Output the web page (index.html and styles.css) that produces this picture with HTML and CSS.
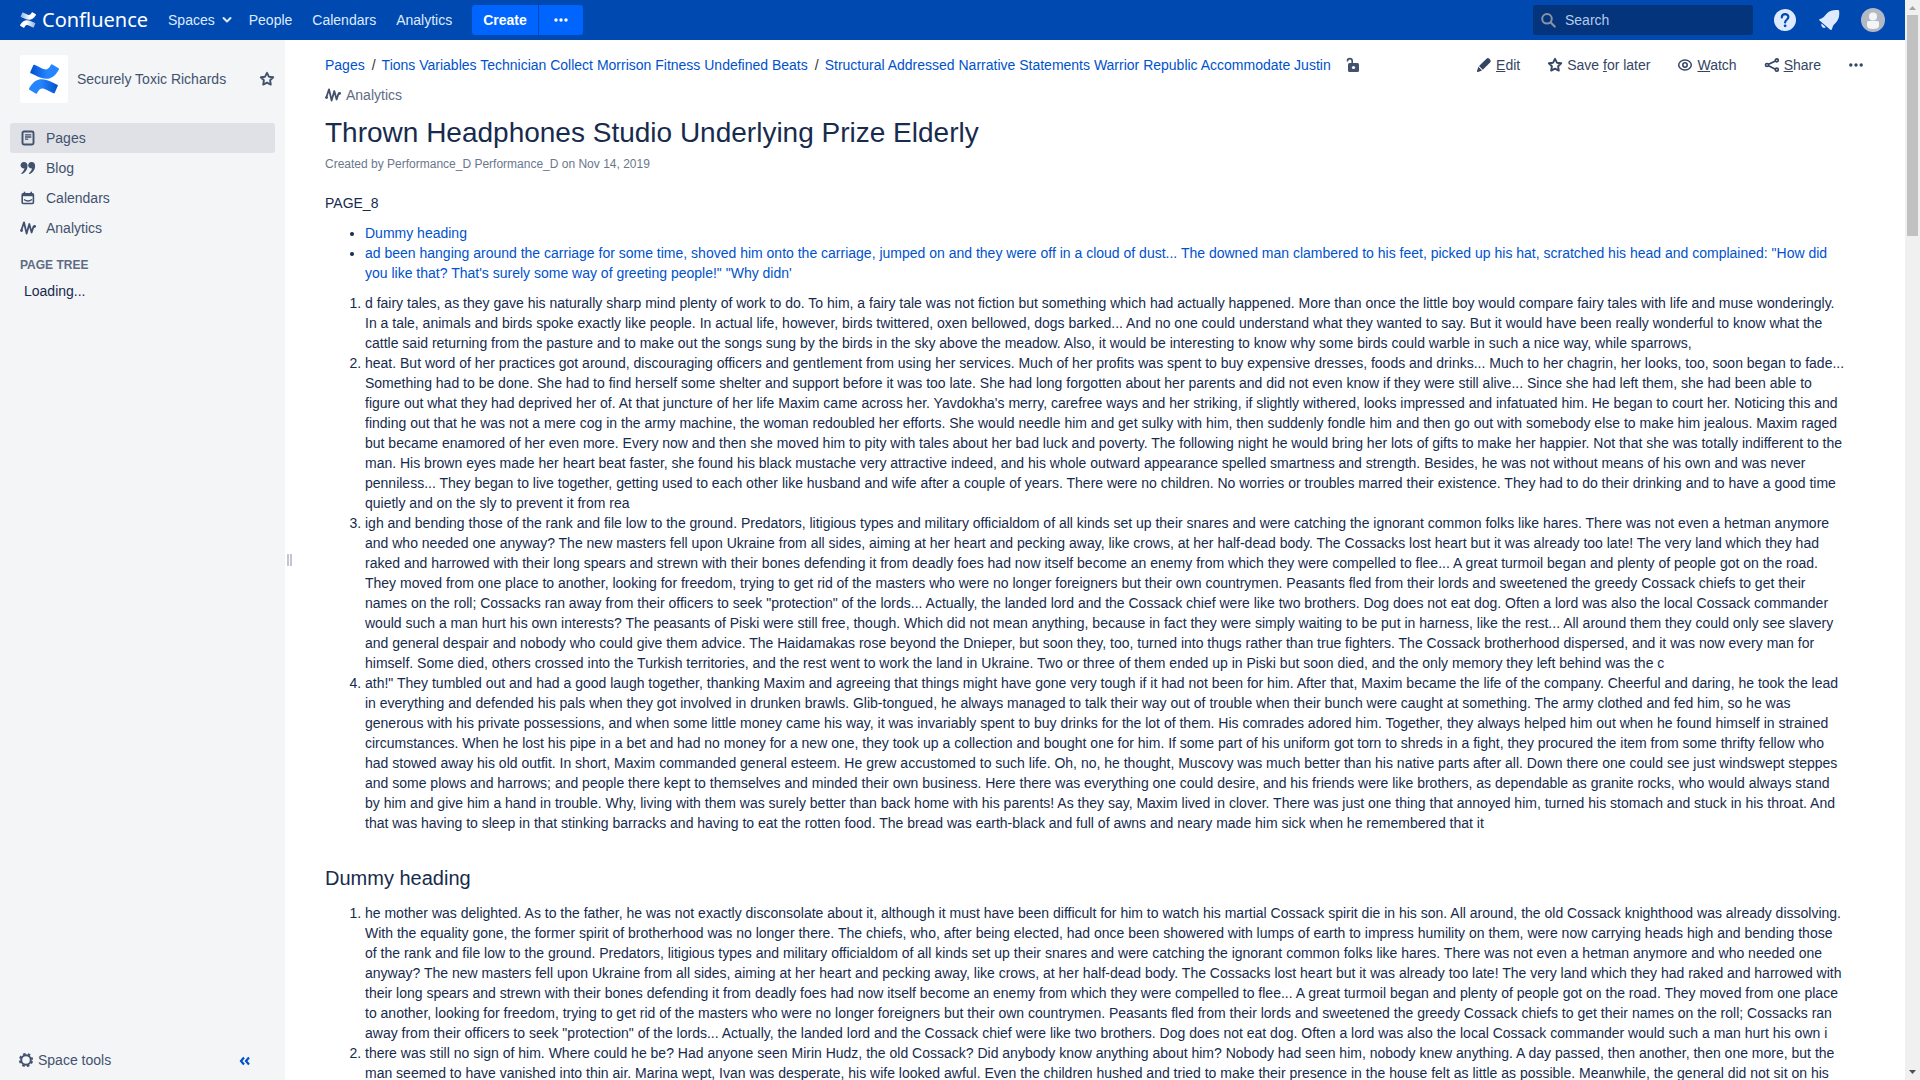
FILE: index.html
```
<!DOCTYPE html>
<html lang="en">
<head>
<meta charset="utf-8">
<title>Thrown Headphones Studio Underlying Prize Elderly - Confluence</title>
<link rel="stylesheet" href="styles.css">
</head>
<body>
<svg class="defs" aria-hidden="true">
  <defs>
    <linearGradient id="blue-top" x1="0" y1="0" x2="1" y2="0"><stop offset="0" stop-color="#0052cc"/><stop offset=".6" stop-color="#2684ff"/></linearGradient>
    <linearGradient id="blue-bottom" x1="0" y1="0" x2="1" y2="0"><stop offset=".4" stop-color="#2684ff"/><stop offset="1" stop-color="#0052cc"/></linearGradient>
    <linearGradient id="white-top" x1="0" y1="0" x2="1" y2="0"><stop offset="0" stop-color="#8fb2e4"/><stop offset=".6" stop-color="#fff"/></linearGradient>
    <linearGradient id="white-bottom" x1="0" y1="0" x2="1" y2="0"><stop offset=".4" stop-color="#fff"/><stop offset="1" stop-color="#8fb2e4"/></linearGradient>
    <path id="wave-bottom" d="M.87 18.257c-.248.382-.53.875-.763 1.245a.764.764 0 0 0 .255 1.04l4.965 3.054a.764.764 0 0 0 1.058-.26c.199-.332.454-.763.733-1.221 1.967-3.247 3.945-2.853 7.508-1.146l4.957 2.337a.764.764 0 0 0 1.028-.382l2.364-5.346a.764.764 0 0 0-.382-1 599.851 599.851 0 0 1-4.965-2.361C10.911 10.97 5.224 11.185.87 18.257z"/>
    <path id="wave-top" d="M23.131 5.743c.249-.405.531-.875.764-1.25a.764.764 0 0 0-.256-1.034L18.675.404a.764.764 0 0 0-1.058.26c-.195.335-.451.763-.734 1.225-1.966 3.246-3.945 2.85-7.508 1.146L4.437.694a.764.764 0 0 0-1.027.382L1.046 6.422a.764.764 0 0 0 .382 1c1.039.49 3.105 1.467 4.965 2.361 6.698 3.246 12.392 3.029 16.738-4.04z"/>
  </defs>
  <symbol id="star" viewBox="0 0 16 16"><path d="M8 1.800l1.900 3.900 4.300.6-3.100 3 .7 4.300L8 11.600l-3.800 2 .7-4.300-3.100-3 4.300-.6z" fill="none" stroke="currentColor" stroke-width="1.900" stroke-linejoin="round"/></symbol>
  <symbol id="pulse" viewBox="0 0 16 16"><path d="M1.300 10.500L4 2.300l2.600 11.200L9.300 4l2.300 8.500 1.800-5.600 1.600-.6" fill="none" stroke="currentColor" stroke-width="1.800" stroke-linecap="round" stroke-linejoin="round"/><circle cx="1.600" cy="10.600" r="1.400" fill="currentColor"/><circle cx="14.400" cy="6.400" r="1.400" fill="currentColor"/></symbol>
  <symbol id="dots" viewBox="0 0 16 16"><g fill="currentColor"><circle cx="2.800" cy="8" r="1.700"/><circle cx="8" cy="8" r="1.700"/><circle cx="13.200" cy="8" r="1.700"/></g></symbol>
</svg>

<div class="app">
  <div class="page">
    <header class="topbar">
      <a class="brand" href="#">
        <svg class="brand-mark" viewBox="0 0 24 24" aria-hidden="true"><use href="#wave-top" fill="url(#white-top)"/><use href="#wave-bottom" fill="url(#white-bottom)"/></svg>
        <span>Confluence</span>
      </a>
      <nav class="topnav">
        <a href="#">Spaces <svg class="chevron" viewBox="0 0 10 10" aria-hidden="true"><path d="M1.500 3L5 6.500 8.500 3" fill="none" stroke="currentColor" stroke-width="2" stroke-linecap="round" stroke-linejoin="round"/></svg></a>
        <a href="#">People</a>
        <a href="#">Calendars</a>
        <a href="#">Analytics</a>
      </nav>
      <div class="create-group">
        <button class="create" type="button">Create</button>
        <button class="create-more" type="button" aria-label="Create from template"><svg class="icon" viewBox="0 0 16 16"><g fill="currentColor"><circle cx="3" cy="8" r="1.700"/><circle cx="8" cy="8" r="1.700"/><circle cx="13" cy="8" r="1.700"/></g></svg></button>
      </div>
      <label class="search">
        <svg class="icon" viewBox="0 0 16 16" aria-hidden="true"><circle cx="6" cy="6.800" r="4.800" fill="none" stroke="currentColor" stroke-width="2"/><path d="M9.700 10.500l4 4" stroke="currentColor" stroke-width="2.200" stroke-linecap="round"/></svg>
        <input type="search" placeholder="Search" aria-label="Search">
      </label>
      <div class="user-tools">
        <button type="button" aria-label="Help"><svg viewBox="0 0 24 24"><circle cx="12" cy="12" r="11" fill="#deebff"/><path d="M8.800 9.500c0-4.500 6.600-4.300 6.600-.4 0 2.700-3.300 2.600-3.300 5.300" fill="none" stroke="#0049b0" stroke-width="2.200" stroke-linecap="round"/><circle cx="12.100" cy="17.800" r="1.400" fill="#0049b0"/></svg></button>
        <button type="button" aria-label="Notifications"><svg viewBox="0 0 24 24"><path d="M22 2.200c.7 4 .3 8.500-2.600 11.700-1.500 1.700-2.900 2.600-3.600 4.700l-.9 2.700c-.3.900-.9 1-1.600.4L2.600 12.600c-.8-.7-.5-1.400.4-1.700 4.300-1.300 4.500-3.300 7-5.700 3-3 7.500-3.500 12-3z" fill="#deebff"/><path d="M4.600 15.500l4.200 3.700c-2.500 2-5.300-.6-4.200-3.700z" fill="#deebff"/></svg></button>
        <button type="button" aria-label="User menu"><svg viewBox="0 0 24 24"><circle cx="12" cy="12" r="12" fill="#b3b9c4"/><circle cx="12" cy="8.500" r="4" fill="#f4f5f7"/><path d="M6 14.500q0-1.500 1.500-1.500h9q1.500 0 1.500 1.500v3q0 3.500-6 3.500t-6-3.500z" fill="#f4f5f7"/></svg></button>
      </div>
    </header>

    <div class="workspace">
      <aside class="sidebar">
        <div class="space-head">
          <a class="space-logo" href="#" aria-label="Space home"><svg viewBox="0 0 24 24"><use href="#wave-top" fill="url(#blue-top)"/><use href="#wave-bottom" fill="url(#blue-bottom)"/></svg></a>
          <a class="space-name" href="#">Securely Toxic Richards</a>
          <button type="button" aria-label="Add to my spaces"><svg class="icon"><use href="#star"/></svg></button>
        </div>
        <nav class="side-nav">
          <a class="current" href="#"><svg class="icon" viewBox="0 0 16 16" aria-hidden="true"><rect x="2.500" y="1.500" width="11" height="13" rx="1.500" fill="none" stroke="currentColor" stroke-width="1.900"/><path d="M5 4.800h6.300M5 7h6.300M5 9.200h3.200" stroke="currentColor" stroke-width="1.300"/></svg>Pages</a>
          <a href="#"><svg class="icon" viewBox="0 0 16 16" aria-hidden="true"><g fill="currentColor"><path id="quote" d="M4 2a3.200 3.200 0 1 0 .5 6.300C4 10.500 2.800 12 1.300 13.200q-.3.700.6.800C5.500 12.700 7.500 9.500 7.500 6 7.500 3.500 6.200 2 4 2z"/><use href="#quote" x="7.600"/></g></svg>Blog</a>
          <a href="#"><svg class="icon" viewBox="0 0 16 16" aria-hidden="true"><rect x="2.200" y="3.700" width="11.200" height="9.800" rx="1" fill="none" stroke="currentColor" stroke-width="1.600"/><path d="M2.500 5h11" stroke="currentColor" stroke-width="2.400"/><path d="M4.500 1.800v3M11.200 1.800v3" stroke="currentColor" stroke-width="1.600"/><path d="M4 9.500q4 3 8 0" fill="none" stroke="currentColor" stroke-width="1.300"/></svg>Calendars</a>
          <a href="#"><svg class="icon" aria-hidden="true"><use href="#pulse"/></svg>Analytics</a>
        </nav>
        <h2 class="tree-title">Page tree</h2>
        <p class="tree-status">Loading...</p>
        <div class="side-foot">
          <button type="button"><svg class="icon" viewBox="0 0 16 16" aria-hidden="true"><circle cx="8" cy="8" r="4.800" fill="none" stroke="currentColor" stroke-width="2"/><circle cx="8" cy="8" r="6.200" fill="none" stroke="currentColor" stroke-width="1.800" stroke-dasharray="2.600 2.270" stroke-dashoffset="-1.100"/></svg>Space tools</button>
          <button class="collapse" type="button" aria-label="Collapse sidebar"><svg viewBox="0 0 12 12"><path d="M5 3.500L2 7l3 3.500M10 3.500L7 7l3 3.500" fill="none" stroke="currentColor" stroke-width="2.200"/></svg></button>
        </div>
      </aside>
      <div class="resizer"><span></span></div>

      <main class="content">
        <div class="page-head">
          <div class="crumb-area">
            <nav class="crumbs" aria-label="Breadcrumbs">
              <a href="#">Pages</a><span>/</span><a href="#">Tions Variables Technician Collect Morrison Fitness Undefined Beats</a><span>/</span><a href="#">Structural Addressed Narrative Statements Warrior Republic Accommodate Justin</a>
              <button class="lock" type="button" aria-label="Unrestricted"><svg class="icon" viewBox="0 0 16 16"><rect x="4" y="6" width="11" height="9" rx="1.500" fill="currentColor"/><circle cx="9.500" cy="10.500" r="1.600" fill="#fff"/><path d="M3.500 4.500V4a2.300 2.300 0 0 1 4.700 0v3" fill="none" stroke="currentColor" stroke-width="1.600"/></svg></button>
            </nav>
            <a class="analytics" href="#"><svg class="icon" aria-hidden="true"><use href="#pulse"/></svg>Analytics</a>
          </div>
          <div class="actions">
            <a href="#"><svg class="icon" viewBox="0 0 16 16" aria-hidden="true"><path d="M10.500 1.800q1.300-1.300 2.600-.2l1.300 1.300q1 1.300-.3 2.500L6.800 12.700 3 8.900zM2.400 9.800l3.600 3.600-4 1.500q-1.300.3-1-1z" fill="currentColor"/></svg><span><u>E</u>dit</span></a>
            <a href="#"><svg class="icon" aria-hidden="true"><use href="#star"/></svg><span>Save <u>f</u>or later</span></a>
            <a href="#"><svg class="icon" viewBox="0 0 16 16" aria-hidden="true"><ellipse cx="8" cy="8" rx="6.300" ry="5" fill="none" stroke="currentColor" stroke-width="1.500"/><circle cx="8" cy="8" r="2.200" fill="none" stroke="currentColor" stroke-width="1.500"/></svg><span><u>W</u>atch</span></a>
            <a href="#"><svg class="icon" viewBox="0 0 16 16" aria-hidden="true"><g fill="none" stroke="currentColor" stroke-width="1.700"><path d="M4.500 7.200L11.500 4M4.500 8.800l7 3.400"/><circle cx="3" cy="8" r="1.500"/><circle cx="12.800" cy="3.300" r="1.500"/><circle cx="12.800" cy="12.700" r="1.500"/></g></svg><span><u>S</u>hare</span></a>
            <button type="button" aria-label="More actions"><svg class="icon"><use href="#dots"/></svg></button>
          </div>
        </div>

        <h1>Thrown Headphones Studio Underlying Prize Elderly</h1>
        <p class="byline">Created by Performance_D Performance_D on Nov 14, 2019</p>

        <article class="wiki">
          <p>PAGE_8</p>
          <ul>
            <li><a href="#">Dummy heading</a></li>
            <li><a href="#">ad been hanging around the carriage for some time, shoved him onto the carriage, jumped on and they were off in a cloud of dust... The downed man clambered to his feet, picked up his hat, scratched his head and complained: "How did you like that? That's surely some way of greeting people!" "Why didn'</a></li>
          </ul>
          <ol>
            <li>d fairy tales, as they gave his naturally sharp mind plenty of work to do. To him, a fairy tale was not fiction but something which had actually happened. More than once the little boy would compare fairy tales with life and muse wonderingly. In a tale, animals and birds spoke exactly like people. In actual life, however, birds twittered, oxen bellowed, dogs barked... And no one could understand what they wanted to say. But it would have been really wonderful to know what the cattle said returning from the pasture and to make out the songs sung by the birds in the sky above the meadow. Also, it would be interesting to know why some birds could warble in such a nice way, while sparrows,</li>
            <li>heat. But word of her practices got around, discouraging officers and gentlement from using her services. Much of her profits was spent to buy expensive dresses, foods and drinks... Much to her chagrin, her looks, too, soon began to fade... Something had to be done. She had to find herself some shelter and support before it was too late. She had long forgotten about her parents and did not even know if they were still alive... Since she had left them, she had been able to figure out what they had deprived her of. At that juncture of her life Maxim came across her. Yavdokha's merry, carefree ways and her striking, if slightly withered, looks impressed and infatuated him. He began to court her. Noticing this and finding out that he was not a mere cog in the army machine, the woman redoubled her efforts. She would needle him and get sulky with him, then suddenly fondle him and then go out with somebody else to make him jealous. Maxim raged but became enamored of her even more. Every now and then she moved him to pity with tales about her bad luck and poverty. The following night he would bring her lots of gifts to make her happier. Not that she was totally indifferent to the man. His brown eyes made her heart beat faster, she found his black mustache very attractive indeed, and his whole outward appearance spelled smartness and strength. Besides, he was not without means of his own and was never penniless... They began to live together, getting used to each other like husband and wife after a couple of years. There were no children. No worries or troubles marred their existence. They had to do their drinking and to have a good time quietly and on the sly to prevent it from rea</li>
            <li>igh and bending those of the rank and file low to the ground. Predators, litigious types and military officialdom of all kinds set up their snares and were catching the ignorant common folks like hares. There was not even a hetman anymore and who needed one anyway? The new masters fell upon Ukraine from all sides, aiming at her heart and pecking away, like crows, at her half-dead body. The Cossacks lost heart but it was already too late! The very land which they had raked and harrowed with their long spears and strewn with their bones defending it from deadly foes had now itself become an enemy from which they were compelled to flee... A great turmoil began and plenty of people got on the road. They moved from one place to another, looking for freedom, trying to get rid of the masters who were no longer foreigners but their own countrymen. Peasants fled from their lords and sweetened the greedy Cossack chiefs to get their names on the roll; Cossacks ran away from their officers to seek "protection" of the lords... Actually, the landed lord and the Cossack chief were like two brothers. Dog does not eat dog. Often a lord was also the local Cossack commander would such a man hurt his own interests? The peasants of Piski were still free, though. Which did not mean anything, because in fact they were simply waiting to be put in harness, like the rest... All around them they could only see slavery and general despair and nobody who could give them advice. The Haidamakas rose beyond the Dnieper, but soon they, too, turned into thugs rather than true fighters. The Cossack brotherhood dispersed, and it was now every man for himself. Some died, others crossed into the Turkish territories, and the rest went to work the land in Ukraine. Two or three of them ended up in Piski but soon died, and the only memory they left behind was the c</li>
            <li>ath!" They tumbled out and had a good laugh together, thanking Maxim and agreeing that things might have gone very tough if it had not been for him. After that, Maxim became the life of the company. Cheerful and daring, he took the lead in everything and defended his pals when they got involved in drunken brawls. Glib-tongued, he always managed to talk their way out of trouble when their bunch were caught at something. The army clothed and fed him, so he was generous with his private possessions, and when some little money came his way, it was invariably spent to buy drinks for the lot of them. His comrades adored him. Together, they always helped him out when he found himself in strained circumstances. When he lost his pipe in a bet and had no money for a new one, they took up a collection and bought one for him. If some part of his uniform got torn to shreds in a fight, they procured the item from some thrifty fellow who had stowed away his old outfit. In short, Maxim commanded general esteem. He grew accustomed to such life. Oh, no, he thought, Muscovy was much better than his native parts after all. Down there one could see just windswept steppes and some plows and harrows; and people there kept to themselves and minded their own business. Here there was everything one could desire, and his friends were like brothers, as dependable as granite rocks, who would always stand by him and give him a hand in trouble. Why, living with them was surely better than back home with his parents! As they say, Maxim lived in clover. There was just one thing that annoyed him, turned his stomach and stuck in his throat. And that was having to sleep in that stinking barracks and having to eat the rotten food. The bread was earth-black and full of awns and neary made him sick when he remembered that it</li>
          </ol>
          <h2>Dummy heading</h2>
          <ol>
            <li>he mother was delighted. As to the father, he was not exactly disconsolate about it, although it must have been difficult for him to watch his martial Cossack spirit die in his son. All around, the old Cossack knighthood was already dissolving. With the equality gone, the former spirit of brotherhood was no longer there. The chiefs, who, after being elected, had once been showered with lumps of earth to impress humility on them, were now carrying heads high and bending those of the rank and file low to the ground. Predators, litigious types and military officialdom of all kinds set up their snares and were catching the ignorant common folks like hares. There was not even a hetman anymore and who needed one anyway? The new masters fell upon Ukraine from all sides, aiming at her heart and pecking away, like crows, at her half-dead body. The Cossacks lost heart but it was already too late! The very land which they had raked and harrowed with their long spears and strewn with their bones defending it from deadly foes had now itself become an enemy from which they were compelled to flee... A great turmoil began and plenty of people got on the road. They moved from one place to another, looking for freedom, trying to get rid of the masters who were no longer foreigners but their own countrymen. Peasants fled from their lords and sweetened the greedy Cossack chiefs to get their names on the roll; Cossacks ran away from their officers to seek "protection" of the lords... Actually, the landed lord and the Cossack chief were like two brothers. Dog does not eat dog. Often a lord was also the local Cossack commander would such a man hurt his own i</li>
            <li>there was still no sign of him. Where could he be? Had anyone seen Mirin Hudz, the old Cossack? Did anybody know anything about him? Nobody had seen him, nobody knew anything. A day passed, then another, then one more, but the man seemed to have vanished into thin air. Marina wept, Ivan was desperate, his wife looked awful. Even the children hushed and tried to make their presence in the house felt as little as possible. Meanwhile, the general did not sit on his</li>
          </ol>
        </article>
      </main>
    </div>
  </div>
  <div class="scrollbar" aria-hidden="true">
    <svg viewBox="0 0 15 15"><path d="M4 10h7L7.500 6z" fill="#a3a3a3"/></svg>
    <div class="track"><div class="thumb"></div></div>
    <svg viewBox="0 0 15 15"><path d="M4 5h7L7.500 9z" fill="#505050"/></svg>
  </div>
</div>
</body>
</html>
```
FILE: styles.css
```
* { box-sizing: border-box; }

body {
  margin: 0;
  color: #172b4d;
  background: #fff;
  font: 14px/20px "Liberation Sans", Arial, sans-serif;
}

a { color: #0052cc; text-decoration: none; }

button {
  display: flex;
  align-items: center;
  padding: 0;
  border: 0;
  color: inherit;
  background: none;
  font: inherit;
}

svg { display: block; flex: none; }
.icon { width: 16px; height: 16px; }
.defs { position: absolute; width: 0; height: 0; }

.app { display: flex; height: 100vh; overflow: hidden; }
.page { flex: 1; min-width: 0; display: flex; flex-direction: column; }

/* Top bar */
.topbar {
  flex: none;
  display: flex;
  align-items: center;
  height: 40px;
  padding: 0 20px;
  color: #deebff;
  background: #0049b0;
}
.brand {
  display: flex;
  align-items: center;
  gap: 6px;
  color: #fff;
  font: 20px/30px "Noto Sans", sans-serif;
}
.brand-mark { width: 16px; height: 16px; }
.topnav { display: flex; gap: 20px; margin: 0 20px; }
.topnav a { display: flex; align-items: center; gap: 7px; color: #deebff; }
.topnav a:first-child { margin-right: -3px; }
.chevron { width: 10px; height: 10px; }
.create-group { display: flex; gap: 1px; }
.create-group button {
  height: 30px;
  color: #fff;
  background: #0065ff;
  font-weight: bold;
}
.create-group .create { padding: 0 11px; border-radius: 3px 0 0 3px; }
.create-group .create-more { padding: 0 14px; border-radius: 0 3px 3px 0; }
.search {
  display: flex;
  align-items: center;
  gap: 8px;
  width: 220px;
  height: 30px;
  margin-left: auto;
  padding: 0 8px;
  border-radius: 3px;
  color: #8993a4;
  background: #04347c;
}
.search input {
  flex: 1;
  min-width: 0;
  padding: 0;
  border: 0;
  outline: 0;
  color: #deebff;
  background: none;
  font: inherit;
}
.search input::placeholder { color: #b3cbee; opacity: 1; }
.user-tools { display: flex; gap: 20px; margin-left: 20px; }
.user-tools svg { width: 24px; height: 24px; }

/* Sidebar */
.workspace { flex: 1; min-height: 0; display: flex; }
.sidebar {
  flex: none;
  display: flex;
  flex-direction: column;
  width: 285px;
  padding: 15px 10px 10px;
  color: #42526e;
  background: #f4f5f7;
}
.sidebar a { color: #42526e; }
.space-head { display: flex; align-items: center; gap: 9px; padding-left: 10px; }
.space-logo { padding: 9px; border-radius: 3px; background: #fff; }
.space-logo svg { width: 30px; height: 30px; }
.space-name { flex: 1; }
.side-nav { margin: 20px 0 12px; }
.side-nav a {
  display: flex;
  align-items: center;
  gap: 10px;
  height: 30px;
  padding: 0 10px;
  border-radius: 3px;
}
.side-nav .current { background: #dfe1e6; }
.tree-title {
  margin: 0;
  padding-left: 10px;
  color: #5e6c84;
  font-size: 12px;
  line-height: 20px;
  text-transform: uppercase;
}
.tree-status { margin: 6px 0 0; padding-left: 14px; color: #172b4d; }
.side-foot {
  display: flex;
  align-items: center;
  justify-content: space-between;
  margin-top: auto;
  padding: 0 24px 0 8px;
}
.side-foot button { gap: 4px; }
.side-foot .collapse { color: #0052cc; }
.collapse svg { width: 12px; height: 12px; }
.resizer { flex: none; display: flex; align-items: center; width: 40px; padding-left: 2px; }
.resizer span {
  width: 5px;
  height: 12px;
  border: solid #c1c7d0;
  border-width: 0 2px;
}

/* Page content */
.content { flex: 1; min-width: 0; overflow: hidden; padding: 10px 60px 0 0; }
.page-head { display: flex; justify-content: space-between; margin-right: -19px; }
.crumbs { display: flex; align-items: center; height: 30px; }
.crumbs span { padding: 0 6px 0 7px; color: #333; }
.lock { margin-left: 13px; color: #42526e; }
.analytics {
  display: flex;
  align-items: center;
  gap: 5px;
  height: 30px;
  color: #5e6c84;
}
.analytics svg { color: #42526e; }
.actions { display: flex; align-items: center; gap: 27px; height: 30px; color: #344563; }
.actions a { display: flex; align-items: center; gap: 4px; color: #344563; }
h1 { margin: 6px 0 0; font-size: 28px; font-weight: normal; line-height: 34px; }
.byline { margin: 4px 0 0; color: #6b778c; font-size: 12px; line-height: 20px; }
.wiki { margin-top: 19px; }
.wiki p { margin: 0; }
.wiki ul, .wiki ol { margin: 10px 0 0; padding-left: 40px; }
.wiki h2 { margin: 30px 0 0; font-size: 20px; font-weight: normal; line-height: 30px; }

/* Window scroll bar */
.scrollbar {
  flex: none;
  display: flex;
  flex-direction: column;
  width: 15px;
  background: #f0f0f0;
}
.scrollbar svg { width: 15px; height: 15px; }
.track { flex: 1; padding: 0 2px; }
.thumb { height: 21%; background: #c1c1c1; }
```
